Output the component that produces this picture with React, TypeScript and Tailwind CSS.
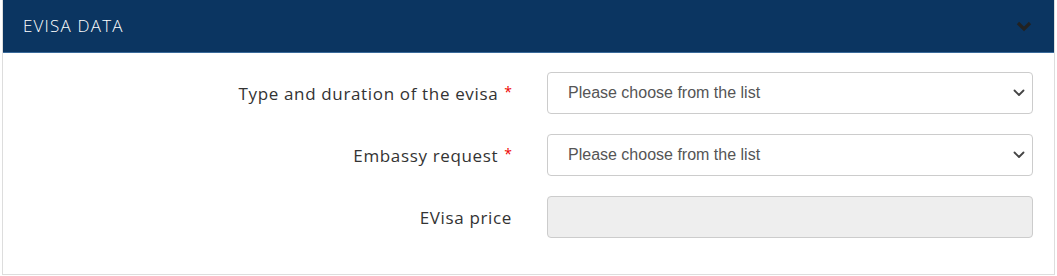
import React from "react";

const labelFont = { fontFamily: '"Open Sans", sans-serif' };

function Chevron() {
  return (
    <svg width="12" height="8" viewBox="0 0 12 8" className="shrink-0">
      <path d="M1.5 1.5 L6 6 L10.5 1.5" fill="none" stroke="#444" strokeWidth="1.8" strokeLinecap="round" strokeLinejoin="round" />
    </svg>
  );
}

function Row({ label, required, children }: { label: string; required?: boolean; children: React.ReactNode }) {
  return (
    <div className="flex items-center h-[42px]">
      <div className="w-[509px] text-right text-[17px] text-[#333] leading-none tracking-[0.65px]" style={labelFont}>
        {label}
        {required && <span className="text-[#e00] ml-[6px] text-[14px] relative top-[-3px] tracking-normal">*</span>}
      </div>
      <div className="ml-[35px] w-[486px] h-full">{children}</div>
    </div>
  );
}

function Select() {
  return (
    <div className="h-full w-full border border-[#ccc] rounded-[4px] bg-white flex items-center pl-[20px] pr-[7px]">
      <span className="flex-1 text-[16px] text-[#555]" style={{ fontFamily: '"Liberation Sans", Arial, sans-serif' }}>
        Please choose from the list
      </span>
      <Chevron />
    </div>
  );
}

export default function App() {
  return (
    <div className="w-[1057px] h-[276px] bg-white pl-[2px] pr-[2px]">
      <div className="border border-[#ddd] border-t-0 h-[275px] flex flex-col">
        <div className="h-[53px] bg-[#0b3561] border-b border-[#3a6a9a] flex items-center justify-between pl-[20px] pr-[22px]">
          <span className="text-white text-[17px] uppercase font-light tracking-[1.2px]" style={labelFont}>
            EVISA DATA
          </span>
          <svg width="16" height="11" viewBox="0 0 16 11">
            <path d="M2 2 L8 8 L14 2" fill="none" stroke="#222" strokeWidth="3.2" strokeLinecap="butt" strokeLinejoin="miter" />
          </svg>
        </div>
        <div className="flex flex-col gap-[20px] pt-[19px]">
          <Row label="Type and duration of the evisa" required>
            <Select />
          </Row>
          <Row label="Embassy request" required>
            <Select />
          </Row>
          <Row label="EVisa price">
            <div className="h-full w-full border border-[#ccc] rounded-[4px] bg-[#eee]" />
          </Row>
        </div>
      </div>
    </div>
  );
}
